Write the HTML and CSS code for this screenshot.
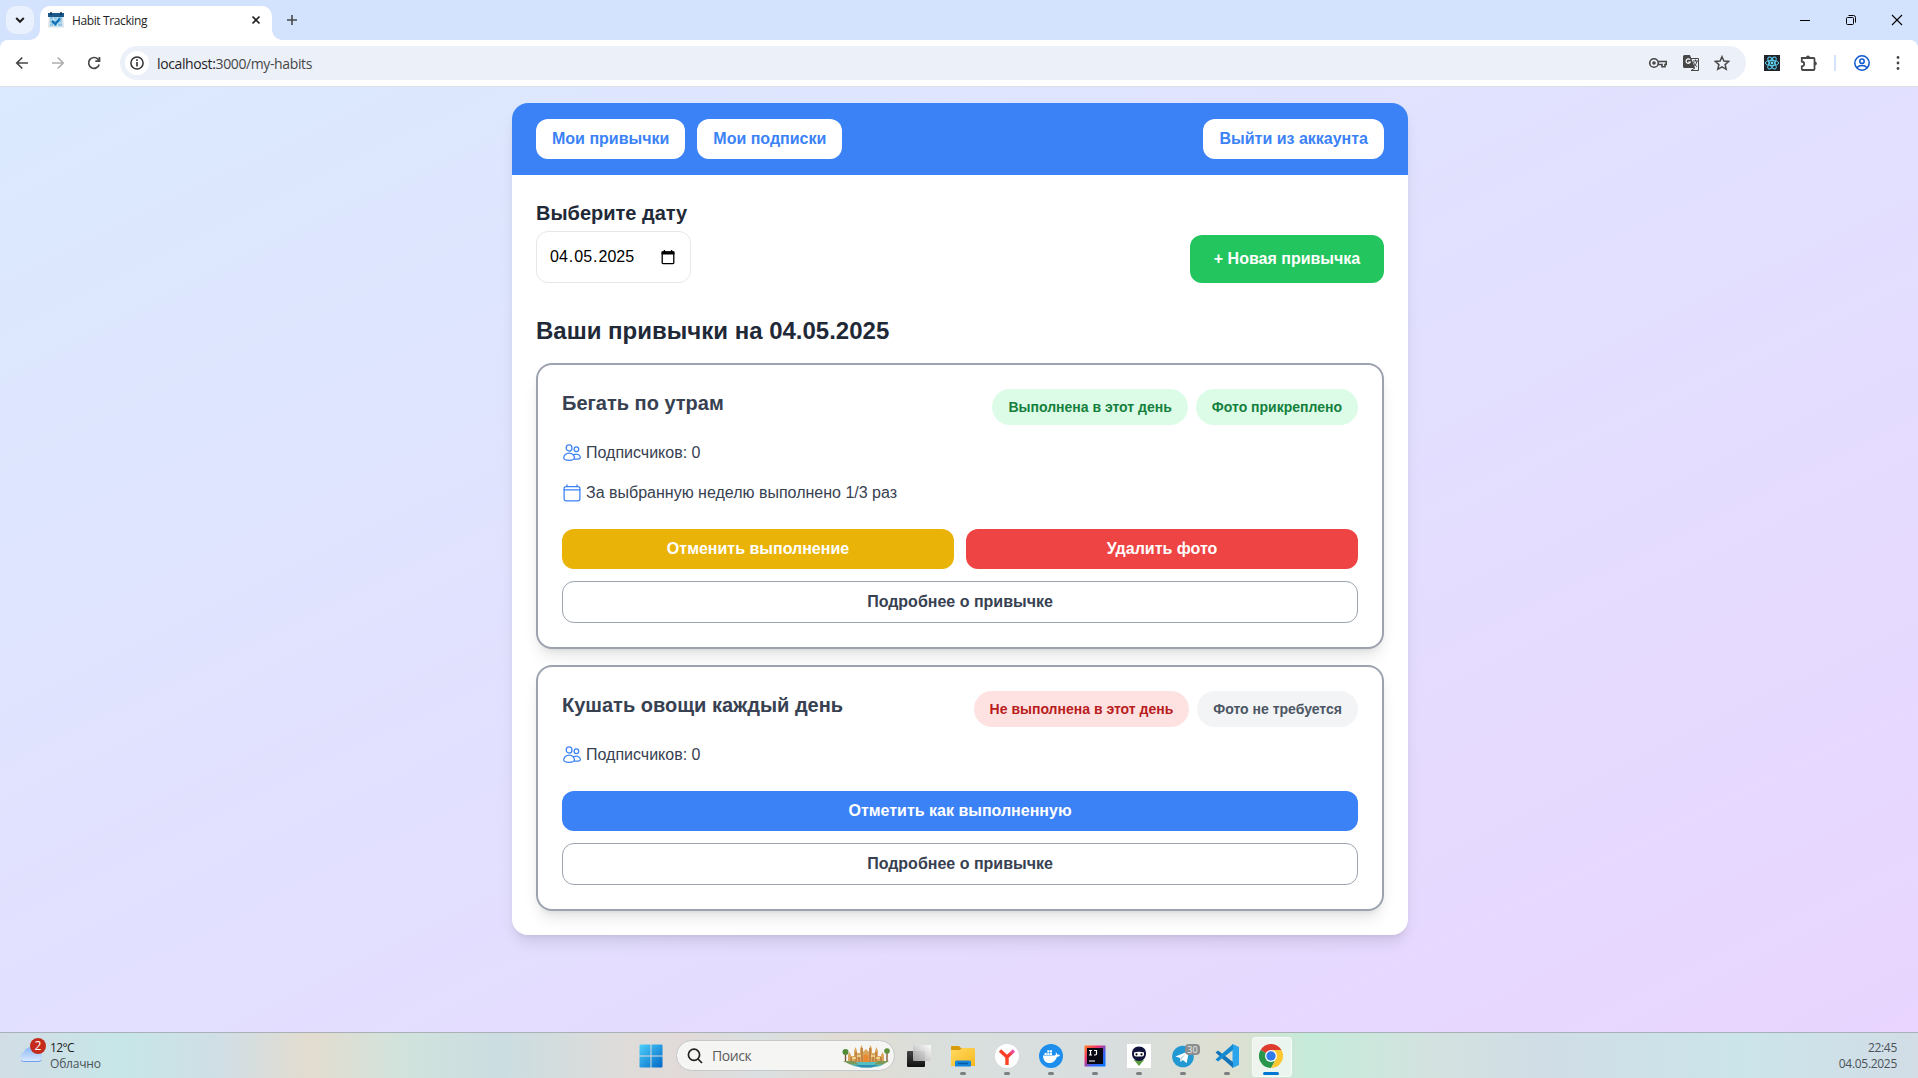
FILE: index.html
```html
<!DOCTYPE html>
<html lang="ru">
<head>
<meta charset="utf-8">
<title>Habit Tracking</title>
<link rel="stylesheet" href="styles.css">
</head>
<body>
<svg class="defs" width="0" height="0">
  <symbol id="people" viewBox="0 0 20 20"><g fill="none" stroke="currentColor" stroke-width="1.25" stroke-linecap="round" stroke-linejoin="round"><ellipse cx="7.100" cy="5" rx="2.900" ry="3.100"/><path d="M7.100 10.200c-3.400 0-5.400 2.400-5.400 4.600 0 1.800 2.400 2.500 5.400 2.500s5.400-.7 5.400-2.500c0-2.200-2-4.600-5.400-4.600z"/><circle cx="14.400" cy="6.200" r="2.300"/><path d="M11.800 11.700c3-1.600 6.200.2 6.600 2.700.2 1.400-1.600 1.900-5.700 1.700"/></g></symbol>
  <symbol id="calendar" viewBox="0 0 20 20"><g fill="none" stroke="currentColor" stroke-width="1.250" stroke-linejoin="round" stroke-linecap="round"><rect x="2.100" y="3.500" width="15.800" height="14.300" rx="2"/><path d="M5 1.800v1.700M15 1.800v1.700M2.100 6.800h15.800"/></g></symbol>
</svg>

<header class="browser">
  <div class="tabstrip">
    <div class="tab-search"><svg width="10" height="10" viewBox="0 0 10 10"><path d="M1.200 3l3.800 3.800L8.800 3" fill="none" stroke="#1f1f1f" stroke-width="2"/></svg></div>
    <div class="tab">
      <svg width="16" height="16" viewBox="0 0 16 16"><path d="M1 3h14l1 12.500H0z" fill="#d8e3e9"/><path d="M2 5h12v9H2z" fill="#8ec6e4"/><path d="M0 1h16v4H0z" fill="#1c5888"/><path d="M3 0v3M13 0v3" stroke="#0d3557" stroke-width="1.500"/><path d="M5.500 5v9M9.500 5v9M2 8h12M2 11h12" stroke="#e9f7ff" stroke-width=".7"/><path d="M4 9l3.300 3 4.700-5.500" fill="none" stroke="#1474b7" stroke-width="2.500"/></svg>
      <span class="tab-title">Habit Tracking</span>
      <svg class="tab-close" width="10" height="10" viewBox="0 0 10 10"><path d="M1.500 1.500l7 7M8.500 1.500l-7 7" stroke="#1f1f1f" stroke-width="1.600"/></svg>
    </div>
    <svg class="new-tab" width="12" height="12" viewBox="0 0 12 12"><path d="M6 1v10M1 6h10" stroke="#474747" stroke-width="1.600"/></svg>
    <div class="window-controls">
      <svg width="12" height="12" viewBox="0 0 12 12"><path d="M1 6.500h10" stroke="#000"/></svg>
      <svg width="12" height="12" viewBox="0 0 12 12" fill="none" stroke="#000"><rect x="1.500" y="3.500" width="7" height="7" rx="1"/><path d="M3.500 1.500h5a2 2 0 0 1 2 2v5"/></svg>
      <svg width="12" height="12" viewBox="0 0 12 12"><path d="M1 1l10 10M11 1L1 11" stroke="#000" stroke-width="1.100"/></svg>
    </div>
  </div>
  <div class="toolbar">
    <div class="nav">
      <svg width="14" height="14" viewBox="0 0 14 14" fill="none" stroke="#474747" stroke-width="1.700"><path d="M13 7H2M7.300 1.500L1.800 7l5.500 5.500"/></svg>
      <svg width="14" height="14" viewBox="0 0 14 14" fill="none" stroke="#aeaeae" stroke-width="1.700"><path d="M1 7h11M6.700 1.500L12.200 7l-5.500 5.500"/></svg>
      <svg width="14" height="14" viewBox="0 0 14 14" fill="none" stroke="#474747" stroke-width="1.700"><path d="M12.200 8.500A5.400 5.400 0 1 1 11 3.200l1.500 1.600"/><path d="M12.500 1v4.200H8.300"/></svg>
    </div>
    <div class="omnibox">
      <div class="info"><svg width="14" height="14" viewBox="0 0 14 14"><circle cx="7" cy="7" r="6.100" fill="none" stroke="#303134" stroke-width="1.500"/><path d="M7 6v4.500M7 3.300v1.600" stroke="#303134" stroke-width="1.600"/></svg></div>
      <span class="url"><b>localhost:</b>3000/my-habits</span>
      <div class="omni-icons">
        <svg width="20" height="16" viewBox="0 0 20 16" fill="none" stroke="#474747" stroke-width="1.600"><circle cx="6" cy="8" r="4.300"/><circle cx="6" cy="8" r="1" fill="#474747"/><path d="M10 6.500h8.200v3H17v2.200h-3V9.500h-4"/></svg>
        <svg width="18" height="18" viewBox="0 0 18 18"><path d="M2.500 1H8l5 13H2.500A1.500 1.500 0 0 1 1 12.500v-10A1.500 1.500 0 0 1 2.500 1z" fill="#474747"/><path d="M9 4.500h7.500v12H9l4-2.500M11 7h5M13.500 5.500V7M15 7c-.5 3-2 4.500-4 5.500M11.500 8c1 2.500 2 4 3.500 4.500" fill="none" stroke="#474747"/><path d="M8 5.700A2.200 2.200 0 1 0 8.300 8H6.200" fill="none" stroke="#fff" stroke-width="1.200"/></svg>
        <svg width="16" height="16" viewBox="0 0 16 16"><path d="M8 1.700l1.900 4.400 4.800.4-3.600 3.100 1.100 4.700L8 11.800l-4.200 2.500 1.100-4.700-3.600-3.100 4.800-.4z" fill="none" stroke="#474747" stroke-width="1.500"/></svg>
      </div>
    </div>
    <div class="extensions">
      <svg width="16" height="16" viewBox="0 0 16 16"><path d="M0 0h16v16H0z" fill="#20232a"/><g fill="none" stroke="#61dafb" stroke-width=".9"><ellipse cx="8" cy="8" rx="6.700" ry="2.600"/><ellipse cx="8" cy="8" rx="6.700" ry="2.600" transform="rotate(60 8 8)"/><ellipse cx="8" cy="8" rx="6.700" ry="2.600" transform="rotate(120 8 8)"/></g><circle cx="8" cy="8" r="1.400" fill="#61dafb"/></svg>
      <svg class="puzzle" width="18" height="18" viewBox="0 0 18 18"><path d="M2 4h11.500a1 1 0 0 1 1 1v10a1 1 0 0 1-1 1H2.800a1 1 0 0 1-1-1v-2.600a2.400 2.400 0 0 0 0-4.800V4z" fill="none" stroke="#474747" stroke-width="1.800"/><path d="M6 4a2 2.400 0 0 1 4 0M14.500 7.500a2.400 2 0 0 1 0 4" fill="#474747"/></svg>
      <span class="divider"></span>
      <svg class="profile" width="16" height="16" viewBox="0 0 16 16" fill="none" stroke="#0b57d0" stroke-width="1.500"><circle cx="8" cy="8" r="7.200"/><circle cx="8" cy="6.200" r="2.200"/><path d="M2.800 12.700c2.800-2.800 7.600-2.800 10.400 0"/></svg>
      <svg width="4" height="14" viewBox="0 0 4 14" fill="#474747"><circle cx="2" cy="1.500" r="1.400"/><circle cx="2" cy="7" r="1.400"/><circle cx="2" cy="12.500" r="1.400"/></svg>
    </div>
  </div>
</header>

<main class="page">
  <div class="container">
    <nav class="topbar">
      <button class="nav-button">Мои привычки</button>
      <button class="nav-button">Мои подписки</button>
      <button class="nav-button logout">Выйти из аккаунта</button>
    </nav>
    <section class="content">
      <div class="date-row">
        <div>
          <h3 class="date-label">Выберите дату</h3>
          <div class="date-input">
            <span class="date-fields"><span>04</span>.<span>05</span>.<span>2025</span></span>
            <svg width="16" height="16" viewBox="0 0 16 16"><path d="M3 3h10a.8.8 0 0 1 .8.800v10a.8.8 0 0 1-.8.800H3a.8.8 0 0 1-.8-.8v-10A.8.8 0 0 1 3 3z" fill="none" stroke="#000" stroke-width="1.300"/><path d="M1.600 2.500h12.800v3H1.600zM3.700 1h1.400v2H3.700zM10.900 1h1.400v2h-1.400z"/></svg>
          </div>
        </div>
        <button class="new-habit">+ Новая привычка</button>
      </div>
      <h2 class="list-title">Ваши привычки на 04.05.2025</h2>
      <div class="habits">
        <article class="habit">
          <div class="habit-head">
            <h3 class="habit-name">Бегать по утрам</h3>
            <div class="badges"><span class="badge green">Выполнена в этот день</span><span class="badge green">Фото прикреплено</span></div>
          </div>
          <p class="meta"><svg width="20" height="20"><use href="#people"/></svg>Подписчиков: 0</p>
          <p class="meta"><svg width="20" height="20"><use href="#calendar"/></svg>За выбранную неделю выполнено 1/3 раз</p>
          <div class="actions">
            <button class="btn yellow">Отменить выполнение</button>
            <button class="btn red">Удалить фото</button>
            <button class="btn outline">Подробнее о привычке</button>
          </div>
        </article>
        <article class="habit">
          <div class="habit-head">
            <h3 class="habit-name">Кушать овощи каждый день</h3>
            <div class="badges"><span class="badge rose">Не выполнена в этот день</span><span class="badge gray">Фото не требуется</span></div>
          </div>
          <p class="meta"><svg width="20" height="20"><use href="#people"/></svg>Подписчиков: 0</p>
          <div class="actions">
            <button class="btn blue">Отметить как выполненную</button>
            <button class="btn outline">Подробнее о привычке</button>
          </div>
        </article>
      </div>
    </section>
  </div>
</main>

<footer class="taskbar">
  <div class="weather">
    <div class="cloud">
      <svg width="26" height="18" viewBox="0 0 26 18"><defs><linearGradient id="cl" x2="0" y2="1"><stop stop-color="#8db9f8"/><stop offset="1" stop-color="#dbe9fd"/></linearGradient></defs><path d="M6 16.500a5 5 0 0 1 0-9.500 7 7 0 0 1 12.500-1.500A5.600 5.600 0 0 1 20 16.500z" fill="url(#cl)"/><path d="M3 15.300c1 1 2 1.200 3 1.200h14c1.500 0 2.700-.5 3.500-1.300" fill="none" stroke="#6fa0ee"/></svg>
      <span class="alert">2</span>
    </div>
    <div class="weather-text"><span class="temp">12°C</span><span>Облачно</span></div>
  </div>
  <div class="apps">
    <div class="app"><svg width="24" height="24" viewBox="0 0 24 24"><defs><linearGradient id="win" x2="1" y2="1"><stop stop-color="#4fd0fb"/><stop offset="1" stop-color="#0067c6"/></linearGradient></defs><path d="M.5 1.500a1 1 0 0 1 1-1h10v11H.5zM12.500.5h10a1 1 0 0 1 1 1v10h-11zM.5 12.500h11v11h-10a1 1 0 0 1-1-1zM12.500 12.500h11v10a1 1 0 0 1-1 1h-10z" fill="url(#win)"/></svg></div>
    <div class="search">
      <svg width="16" height="16" viewBox="0 0 16 16" fill="none" stroke="#222" stroke-width="1.700"><circle cx="7" cy="6.800" r="5.600"/><path d="M11 11l4 4"/></svg>
      <span>Поиск</span>
      <svg class="castle" width="48" height="24" viewBox="0 0 48 24"><ellipse cx="25" cy="20" rx="16" ry="3.500" fill="#55bfc3"/><path d="M13 21h24l-8 2.500H19z" fill="#2c8eb0"/><path d="M6 18v-7l1.500-3L9 11v1h3V7l1.500-4L15 7v2h3V5l1.500-4L21 5v3l3-3 3 3V5l1.500-4L30 5v4h3V7l1.500-4L36 7v5h3v-1l1.500-3 1.500 3v7z" fill="#dba75c"/><path d="M14 8v10M17 11v7M20 4v14M28 4v14M31 11v7M34 8v10M9 13v5M39 13v5" stroke="#a9652f"/><path d="M10 14h4M34 14h4M15 12h4M29 12h4" stroke="#f9dfa0" stroke-width="1.500"/><path d="M21.500 18v-5a2.500 2.500 0 0 1 5 0v5z" fill="#e88a30"/><path d="M3.500 10v8M45 8v10" stroke="#78502d" stroke-width="1.300"/><circle cx="3.500" cy="8" r="3" fill="#548b36"/><circle cx="45" cy="7" r="2.800" fill="#5f8f3b"/><path d="M1 17h11l5 3.500H8zM36 17h11l-6 3.500h-9z" fill="#7a9a5a"/></svg>
    </div>
    <div class="app"><svg width="24" height="24" viewBox="0 0 24 24"><defs><linearGradient id="tv" x2="0" y2="1"><stop stop-color="#444"/><stop offset="1" stop-color="#111"/></linearGradient><linearGradient id="tv2" x1="1" x2="0" y2="1"><stop stop-color="#fff"/><stop offset="1" stop-color="#a5a5a5"/></linearGradient></defs><rect y="7" width="18" height="16" rx="1" fill="url(#tv)"/><rect x="6" y="1" width="18" height="16" rx="1" fill="url(#tv2)" opacity=".93"/></svg></div>
    <div class="app running"><svg width="24" height="24" viewBox="0 0 24 24"><defs><linearGradient id="fo" x2="1" y2="1"><stop stop-color="#ffda61"/><stop offset="1" stop-color="#f8b91f"/></linearGradient></defs><path d="M0 3a1 1 0 0 1 1-1h7l2 2h13v7H0z" fill="#d99b0c"/><path d="M0 6h9l2-2h11.500A1.500 1.500 0 0 1 24 5.500V22H0z" fill="url(#fo)"/><path d="M4 22.500V18a1.500 1.500 0 0 1 1.500-1.500h13A1.500 1.500 0 0 1 20 18v4.500z" fill="#1686db"/><path d="M7 19.500h10" stroke="#075a9f" stroke-width="1.500"/></svg></div>
    <div class="app running"><svg width="24" height="24" viewBox="0 0 24 24"><defs><linearGradient id="ya" gradientUnits="userSpaceOnUse" x1="5" y1="20" x2="19" y2="5"><stop stop-color="#ff4a22"/><stop offset=".6" stop-color="#fb3b25"/><stop offset="1" stop-color="#e657da"/></linearGradient></defs><circle cx="12" cy="12" r="12" fill="#fff"/><path d="M5 6.500l7 6.500v8M12 13l7-6.500" fill="none" stroke="url(#ya)" stroke-width="3.400"/></svg></div>
    <div class="app running"><svg width="24" height="24" viewBox="0 0 24 24"><circle cx="12" cy="12" r="12" fill="#1d8eed"/><path d="M4 11.500h12c1-1 1.200-2 .6-3.200 1.100.6 1.600 1.400 1.700 2.400 1-.2 2 0 2.700.5-.6 1.100-1.600 1.500-3 1.500C16.500 17 13.500 19 10.500 19 6.500 19 4.200 16.500 4 11.500z" fill="#fff"/><path d="M5.500 8.800h7.500V11H5.500zM8 6.200h5v2.300H8z" fill="#fff"/><path d="M8 6v5M10.500 6v5M5 8.650h8" stroke="#1d8eed" stroke-width=".5"/></svg></div>
    <div class="app running"><svg width="24" height="24" viewBox="0 0 24 24"><defs><linearGradient id="ij" x2="1" y2="1"><stop stop-color="#fc801d"/><stop offset=".35" stop-color="#ef2f71"/><stop offset=".65" stop-color="#365ff4"/><stop offset="1" stop-color="#087cfa"/></linearGradient></defs><path d="M1.500 1.500h21v21h-21z" fill="url(#ij)"/><path d="M4 4h16v16H4z" fill="#080713"/><path d="M6 6.500h3M7.500 6.500v4.700M6 11h3M11 6.500h2.500v3.300c0 .8-.5 1.200-1.200 1.200H11M6 17h6" fill="none" stroke="#fff" stroke-width="1.200"/></svg></div>
    <div class="app running"><svg width="24" height="24" viewBox="0 0 24 24"><path d="M0 0h24v24H0z" fill="#fff"/><path d="M7 16h10l-5 6z" fill="#5d9d42"/><path d="M12 2.500c4.500 0 7 3 7 7 0 4.500-3 7.500-7 7.500s-7-3-7-7.500c0-4 2.500-7 7-7z" fill="#11133b"/><path d="M7 8.500c3-1 7-1 10 0v2c0 1-1 2-2 2H9c-1 0-2-1-2-2z" fill="#fff"/><circle cx="9.500" cy="10.300" r="1.100"/><circle cx="14.500" cy="10.300" r="1.100"/></svg></div>
    <div class="app running"><svg width="24" height="24" viewBox="0 0 24 24"><circle cx="12" cy="12.500" r="10.800" fill="#2399d3"/><path d="M4.500 12.500L18 7l-2.300 12-4-3-2 2-.7-4z" fill="#fff"/><path d="M9 14l6-4.500-4.300 5.500-1 3z" fill="#b8d7e8"/></svg><span class="count">30</span></div>
    <div class="app running"><svg width="24" height="24" viewBox="0 0 24 24"><path d="M17.500 0L24 3v18l-6.500 3z" fill="#2aa5ed"/><path d="M.5 8.500L3 6.500 18 18v6L.5 8.500z" fill="#1474ba"/><path d="M.5 15.500L3 17.500 18 6V0L.5 15.500z" fill="#168ad0"/></svg></div>
    <div class="app running active"><svg width="24" height="24" viewBox="0 0 24 24"><path d="M12 12L1.600 6A12 12 0 0 1 22.400 6z" fill="#de3c2f"/><path d="M12 12L1.600 6a12 12 0 0 0 10.400 18l5-9z" fill="#28964b"/><path d="M12 6h10.400A12 12 0 0 1 12 24l5.200-9z" fill="#fcc72f"/><circle cx="12" cy="12" r="6" fill="#fff"/><circle cx="12" cy="12" r="4.700" fill="#3079e9"/></svg></div>
  </div>
  <div class="clock"><span>22:45</span><span>04.05.2025</span></div>
</footer>
</body>
</html>
```
FILE: styles.css
```css
* { box-sizing: border-box; }
body {
  margin: 0;
  height: 1078px;
  display: grid;
  grid-template-rows: 87px 1fr 46px;
  overflow: hidden;
  font-family: "Liberation Sans", Arial, sans-serif;
  font-size: 16px;
  line-height: 24px;
}
h2, h3, p { margin: 0; }
svg { display: block; flex: none; }
.defs { position: absolute; }
button { font: inherit; border: 0; font-weight: 700; white-space: nowrap; }

/* Browser window */
.browser { background: #d3e2fd; font-family: "Open Sans", "Noto Sans", sans-serif; }
.tabstrip { display: flex; height: 40px; padding-left: 6px; align-items: center; }
.tab-search {
  width: 28px; height: 28px; border-radius: 10px; background: #e9f0fe;
  display: grid; place-items: center; flex: none;
}
.tab {
  position: relative; display: flex; align-items: center; align-self: flex-end;
  width: 232px; height: 34px; margin-left: 6px; padding: 0 11px 6px 8px;
  background: #fff; border-radius: 10px 10px 0 0;
}
.tab::before, .tab::after {
  content: ""; position: absolute; bottom: 0; width: 10px; height: 10px;
}
.tab::before { left: -10px; background: radial-gradient(circle at 0 0, transparent 9.5px, #fff 10px); }
.tab::after { right: -10px; background: radial-gradient(circle at 100% 0, transparent 9.5px, #fff 10px); }
.tab-title { margin-left: 8px; padding-top: 2px; font-size: 12px; letter-spacing: -0.38px; color: #1f1f1f; }
.tab-close { margin-left: auto; }
.new-tab { margin-left: 14px; }
.window-controls { display: flex; gap: 34px; margin-left: auto; padding-right: 15px; }
.toolbar {
  display: flex; align-items: center; height: 47px; background: #fff;
  border-radius: 8px 8px 0 0; border-bottom: 1px solid #dcdfe4;
}
.nav { display: flex; gap: 22px; padding-left: 15px; }
.omnibox {
  display: flex; align-items: center; width: 1626px; height: 34px; margin-left: 19px;
  padding: 0 16px 0 5px; border-radius: 17px; background: #ecf0f9;
}
.info { width: 24px; height: 24px; border-radius: 50%; background: #fff; display: grid; place-items: center; }
.url { margin-left: 8px; padding-top: 1px; font-size: 14px; letter-spacing: -0.38px; color: #474747; }
.url b { font-weight: 400; color: #1f1f1f; }
.omni-icons { display: flex; gap: 14px; margin-left: auto; align-items: center; }
.extensions { display: flex; align-items: center; margin-left: 18px; }
.puzzle { margin-left: 20px; }
.divider { width: 2px; height: 16px; margin-left: 16px; background: #d3e2fd; }
.profile { margin: 0 26px 0 18px; }

/* Page */
.page {
  display: flex; align-items: flex-start; justify-content: center; padding: 16px 0 0 2px;
  background: linear-gradient(to bottom right, #dbeafe, #e9d5ff);
}
.container {
  width: 896px; border-radius: 16px; background: #fff; overflow: hidden;
  box-shadow: 0 10px 15px -3px rgb(0 0 0 / .1), 0 4px 6px -4px rgb(0 0 0 / .1);
}
.topbar { display: flex; gap: 12px; padding: 16px 24px; background: #3b82f6; }
.nav-button { height: 40px; padding: 0 16px; border-radius: 12px; background: #fff; color: #3b82f6; }
.logout { margin-left: auto; }
.content { padding: 24px; }
.date-row { display: flex; justify-content: space-between; align-items: flex-end; }
.date-label { font-size: 20px; line-height: 28px; margin-bottom: 4px; color: #1f2937; }
.date-input {
  display: flex; align-items: center; justify-content: space-between;
  width: 155px; height: 52px; padding: 0 14px 0 12px; border: 1px solid #e5e7eb; border-radius: 12px;
}
.date-fields span { padding: 0 1px; }
.new-habit { width: 194px; height: 48px; border-radius: 12px; background: #22c55e; color: #fff; padding: 0; }
.list-title { margin: 32px 0 16px; font-size: 24px; line-height: 32px; color: #1f2937; }
.habits { display: flex; flex-direction: column; gap: 16px; }
.habit {
  padding: 24px; border: 2px solid #9ca3af; border-radius: 16px; background: #fff;
  box-shadow: 0 10px 15px -3px rgb(0 0 0 / .1), 0 4px 6px -4px rgb(0 0 0 / .1);
}
.habit-head { display: flex; justify-content: space-between; height: 36px; }
.habit-name { font-size: 20px; line-height: 28px; color: #374151; }
.badges { display: flex; gap: 8px; }
.badge { padding: 8px 16px; border-radius: 18px; font-size: 14px; line-height: 20px; font-weight: 700; }
.green { background: #dcfce7; color: #15803d; }
.rose { background: #fee2e2; color: #b91c1c; }
.gray { background: #f3f4f6; color: #4b5563; }
.meta { display: flex; align-items: center; gap: 4px; margin-top: 16px; color: #374151; }
.meta svg { color: #3b82f6; }
.actions { display: flex; flex-wrap: wrap; gap: 12px; margin-top: 24px; }
.btn { flex: 1 1 300px; height: 40px; padding: 0 16px; border-radius: 12px; color: #fff; }
.yellow { background: #eab308; }
.red { background: #ef4444; }
.blue { background: #3b82f6; flex-basis: 100%; }
.outline { flex-basis: 100%; height: 42px; border: 1px solid #9ca3af; background: #fff; color: #374151; }

/* Desktop taskbar */
.taskbar {
  display: grid; grid-template-columns: 629px auto 1fr;
  border-top: 1px solid #a9b0b8;
  font: 12px/16px "Open Sans", "Noto Sans", sans-serif; color: #4a5359;
  background: linear-gradient(90deg, #d2dde6 0, #c6e6e7 120px, #d0dee6 220px, #e3dccf 310px, #d1e3dc 400px, #cbdde1 500px, #dedcda 620px, #e1dad8 680px, #dadfe1 760px, #e1dcd3 850px, #d8dfdd 960px, #d8dedf 1110px, #dedfd1 1230px, #c5ebda 1310px, #d3e2df 1430px, #d0dde6 1540px, #cbe4ea 1740px, #d2dde6 1918px);
}
.weather { display: flex; padding: 7px 0 0 18px; }
.cloud { position: relative; width: 32px; padding-top: 5px; }
.alert {
  position: absolute; left: 12px; top: -2px; width: 16px; height: 16px; border-radius: 50%;
  background: #c42b1c; color: #fff; font-size: 12px; line-height: 16px; text-align: center;
}
.weather-text { display: flex; flex-direction: column; letter-spacing: -.2px; }
.temp { color: #1b1e20; letter-spacing: -.6px; }
.apps { display: flex; align-items: center; }
.app { position: relative; width: 44px; height: 45px; display: grid; place-items: center; padding-top: 1px; }
.running::after {
  content: ""; position: absolute; left: 19px; bottom: 3px; width: 6px; height: 3px;
  border-radius: 2px; background: #7b7f80;
}
.active::before {
  content: ""; position: absolute; left: 3px; top: 4px; width: 38px; height: 38px;
  border-radius: 4px; background: rgb(255 255 255 / .6); border: 1px solid rgb(255 255 255 / .5);
}
.active svg { position: relative; }
.active::after { left: 14px; width: 16px; background: #0078d4; }
.count {
  position: absolute; right: 5px; top: 11px; width: 15px; height: 11px; border-radius: 4px;
  background: #8b8e8f; color: #eee; font-size: 9px; line-height: 11px; text-align: center;
}
.search {
  display: flex; align-items: center; width: 219px; height: 31px; margin: 0 2px 0 3px; padding: 0 4px 0 10px;
  border: 1px solid #c6c9c9; border-radius: 16px; background: #f5f5f4;
  font-size: 14px; color: #5c5c5c;
}
.search span { margin-left: 9px; letter-spacing: -.4px; }
.castle { margin-left: auto; }
.clock { display: flex; flex-direction: column; align-items: flex-end; padding: 7px 21px 0 0; letter-spacing: -.3px; }
```
